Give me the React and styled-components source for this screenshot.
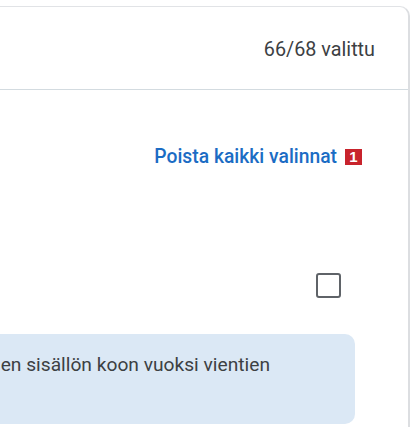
import React from "react";
import styled, { createGlobalStyle } from "styled-components";

const Global = createGlobalStyle`
  html, body { margin: 0; padding: 0; background: #ffffff; }
  body { font-family: Roboto, "Noto Sans", "Liberation Sans", sans-serif; overflow: hidden; }
`;

const Page = styled.div`
  width: 417px;
  height: 427px;
  padding-top: 6px;
  box-sizing: border-box;
  overflow: hidden;
`;

const Card = styled.section`
  margin-left: -20px;
  width: 430px;
  height: 440px;
  box-sizing: border-box;
  background: #fff;
  border: 1px solid #e1e3e6;
  border-right: 2px solid #dcdee1;
  border-radius: 10px;
  display: flex;
  flex-direction: column;
`;

const Header = styled.header`
  height: 83px;
  display: flex;
  align-items: center;
  justify-content: flex-end;
  padding: 3px 33px 0 0;
  box-sizing: border-box;
  border-bottom: 1px solid #d3dbe0;
`;

const Count = styled.span`
  font-size: 19.8px;
  color: #3c4043;
`;

const Body = styled.div`
  display: flex;
  flex-direction: column;
  padding-right: 53px;
`;

const LinkRow = styled.div`
  display: flex;
  justify-content: flex-end;
  padding: 56px 18px 0 0;
`;

const LinkWrap = styled.span`
  position: relative;
  display: inline-flex;
`;

const Link = styled.a`
  font-size: 19.3px;
  font-weight: 500;
  color: #1b6cc4;
  text-decoration: none;
  line-height: 22px;
`;

const Badge = styled.span`
  position: absolute;
  left: calc(100% + 8px);
  top: 3px;
  width: 17px;
  height: 16px;
  background: #c8232c;
  color: #fff;
  font-family: "Liberation Sans", Arial, sans-serif;
  font-weight: 700;
  font-size: 15px;
  line-height: 16px;
  text-align: center;
`;

const CheckRow = styled.div`
  display: flex;
  justify-content: flex-end;
  padding: 105px 14px 0 0;
`;

const Checkbox = styled.span`
  width: 21px;
  height: 21px;
  border: 2px solid #5f6368;
  border-radius: 3px;
`;

const Info = styled.div`
  margin-top: 36px;
  height: 90px;
  background: #dbe8f5;
  border-radius: 10px;
  display: flex;
  justify-content: flex-end;
  padding: 17px 85px 0 0;
  box-sizing: border-box;
  overflow: hidden;
`;

const InfoText = styled.p`
  margin: 0;
  flex-shrink: 0;
  font-size: 19.2px;
  line-height: 28px;
  color: #3c4043;
  white-space: pre;
`;

export default function App() {
  return (
    <>
      <Global />
      <Page>
        <Card>
          <Header>
            <Count>66/68 valittu</Count>
          </Header>
          <Body>
            <LinkRow>
              <LinkWrap>
                <Link href="#">Poista kaikki valinnat</Link>
                <Badge>1</Badge>
              </LinkWrap>
            </LinkRow>
            <CheckRow>
              <Checkbox role="checkbox" aria-checked="false" />
            </CheckRow>
            <Info>
              <InfoText>{"Huomaa, että asiakirjojen sisällön koon vuoksi vientien\non rajoitettu."}</InfoText>
            </Info>
          </Body>
        </Card>
      </Page>
    </>
  );
}
